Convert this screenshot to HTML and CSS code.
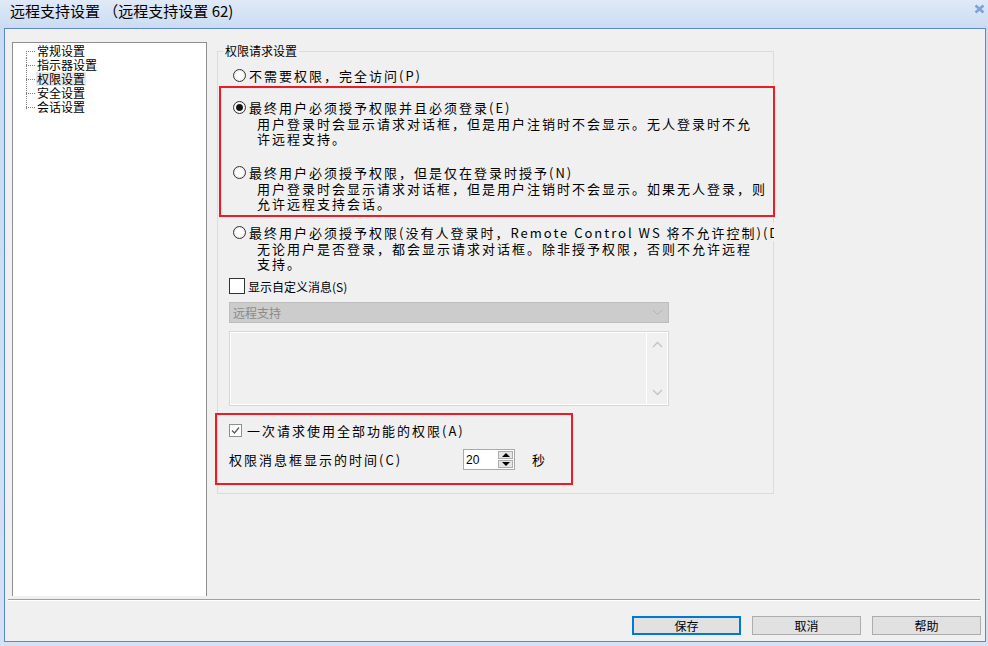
FILE: index.html
```html
<!DOCTYPE html>
<html lang="zh-CN">
<head>
    <meta charset="UTF-8">
    <title>远程支持设置</title>
    <link rel="stylesheet" href="styles.css">
</head>
<body>
    <div class="window">
        <div class="titlebar">
            <span class="title">远程支持设置 （远程支持设置 62)</span>
            <svg class="close" width="11" height="10" viewBox="0 0 11 10">
                <path d="M1.5 1.5 L9.5 8.5 M9.5 1.5 L1.5 8.5" stroke="#7ba4d6" stroke-width="2.6" fill="none"/>
            </svg>
        </div>

        <div class="client">
            <div class="main">
                <div class="tree">
                    <ul>
                        <li><span>常规设置</span></li>
                        <li><span>指示器设置</span></li>
                        <li><span class="selected">权限设置</span></li>
                        <li><span>安全设置</span></li>
                        <li><span>会话设置</span></li>
                    </ul>
                </div>

                <div class="settings">
                    <div class="group">
                        <div class="group-title">权限请求设置</div>

                        <label class="option opt-first"><span class="radio"></span>不需要权限，完全访问(P)</label>

                        <div class="mark mark-options">
                            <label class="option"><span class="radio checked"></span>最终用户必须授予权限并且必须登录(E)</label>
                            <p class="desc">用户登录时会显示请求对话框，但是用户注销时不会显示。无人登录时不允<br>许远程支持。</p>
                            <label class="option option-gap"><span class="radio"></span>最终用户必须授予权限，但是仅在登录时授予(N)</label>
                            <p class="desc">用户登录时会显示请求对话框，但是用户注销时不会显示。如果无人登录，则<br>允许远程支持会话。</p>
                        </div>

                        <label class="option option-wide"><span class="radio"></span>最终用户必须授予权限(没有人登录时，Remote Control WS 将不允许控制)(D)</label>
                        <p class="desc desc-free">无论用户是否登录，都会显示请求对话框。除非授予权限，否则不允许远程<br>支持。</p>

                        <label class="check-row"><span class="checkbox"></span>显示自定义消息(S)</label>

                        <div class="combo">
                            <span>远程支持</span>
                            <svg width="11" height="7" viewBox="0 0 11 7"><polyline points="1,1 5.5,5.5 10,1" stroke="#b4b4b4" fill="none"/></svg>
                        </div>

                        <div class="memo">
                            <div class="memo-scroll">
                                <svg width="11" height="7" viewBox="0 0 11 7"><polyline points="1,6 5.5,1.5 10,6" stroke="#c4c4c4" stroke-width="1.4" fill="none"/></svg>
                                <svg width="11" height="7" viewBox="0 0 11 7"><polyline points="1,1 5.5,5.5 10,1" stroke="#c4c4c4" stroke-width="1.4" fill="none"/></svg>
                            </div>
                        </div>

                        <div class="mark mark-request">
                            <label class="check-row request">
                                <span class="checkbox small">
                                    <svg width="11" height="11" viewBox="0 0 11 11"><polyline points="2,5.5 4.5,8 9,2.5" stroke="#5a5a5a" stroke-width="1.3" fill="none"/></svg>
                                </span>一次请求使用全部功能的权限(A)
                            </label>
                            <div class="time-row">
                                <span class="time-label">权限消息框显示的时间(C)</span>
                                <div class="spin">
                                    <span class="spin-value">20</span>
                                    <div class="spin-btns">
                                        <span class="spin-btn"><span class="tri-up"></span></span>
                                        <span class="spin-btn"><span class="tri-down"></span></span>
                                    </div>
                                </div>
                                <span class="unit">秒</span>
                            </div>
                        </div>
                    </div>
                </div>
            </div>

            <div class="separator"></div>

            <div class="buttons">
                <button class="default">保存</button>
                <button>取消</button>
                <button>帮助</button>
            </div>
        </div>
    </div>
</body>
</html>
```

FILE: styles.css
```css
* {
    box-sizing: border-box;
}
body {
    margin: 0;
    overflow: hidden;
    font-family: "Noto Sans CJK SC", sans-serif;
    font-size: 12px;
    color: #000;
    background: #cbdcf3;
}
.window {
    width: 988px;
    height: 646px;
    background: linear-gradient(#e0eaf7, #cadcf3 28px, #d3e2f5);
}
.titlebar {
    height: 28px;
    display: flex;
    justify-content: space-between;
    align-items: flex-start;
    padding: 0 3px 0 10px;
}
.title {
    font-size: 15px;
    line-height: 18px;
    padding-top: 2px;
}
.close {
    margin-top: 4px;
}
.client {
    margin: 0 2px 0 4px;
    height: 614px;
    border: 1px solid #5f88c6;
    background: #f0f0f0;
    display: flex;
    flex-direction: column;
}
.main {
    display: flex;
    height: 567px;
    padding: 13px 0 0 7px;
}

/* arbol de la izquierda */
.tree {
    width: 195px;
    height: 554px;
    background: #fff;
    border: 1px solid #8f8f8f;
    border-bottom: none;
}
.tree ul {
    list-style: none;
    margin: 1px 0 0 13px;
    padding: 0;
}
.tree li {
    line-height: 14px;
    height: 14px;
    padding-left: 10px;
    background:
        repeating-linear-gradient(to right, #7f7f7f 0 1px, transparent 1px 2px) 0 7px / 9px 1px no-repeat,
        repeating-linear-gradient(#7f7f7f 0 1px, transparent 1px 2px) 0 0 / 1px 100% no-repeat;
}
.tree li:first-child {
    background:
        repeating-linear-gradient(to right, #7f7f7f 0 1px, transparent 1px 2px) 0 7px / 9px 1px no-repeat,
        repeating-linear-gradient(#7f7f7f 0 1px, transparent 1px 2px) 0 7px / 1px 7px no-repeat;
}
.tree li:last-child {
    background:
        repeating-linear-gradient(to right, #7f7f7f 0 1px, transparent 1px 2px) 0 7px / 9px 1px no-repeat,
        repeating-linear-gradient(#7f7f7f 0 1px, transparent 1px 2px) 0 0 / 1px 9px no-repeat;
}
.tree span {
    display: inline-block;
    padding: 0 1px;
}
.tree .selected {
    background: #e8e8e8;
}

/* grupo de opciones */
.settings {
    margin-left: 10px;
    padding-top: 9px;
}
.group {
    width: 557px;
    height: 443px;
    border: 1px solid #dcdcdc;
}
.group-title {
    width: max-content;
    margin: -8px 0 0 5px;
    padding: 0 2px;
    line-height: 14px;
    background: #f0f0f0;
}
.option {
    display: flex;
    align-items: center;
    height: 18px;
    font-size: 13px;
    letter-spacing: 2px;
    white-space: nowrap;
}
.opt-first {
    margin: 8px 0 0 15px;
}
.option-gap {
    margin-top: 17px;
}
.option-wide {
    margin: 6px -1px 0 15px;
    background: #f0f0f0;
    overflow: hidden;
}
.radio {
    flex: none;
    width: 13px;
    height: 13px;
    margin-right: 3px;
    border: 1px solid #333;
    border-radius: 50%;
    background: radial-gradient(circle, #fff 40%, #d6d6d6 100%);
}
.radio.checked {
    background: radial-gradient(circle, #111 0 2.8px, #666 3.4px, #fff 4px, #d6d6d6 100%);
}
.desc {
    margin: 0 0 0 24px;
    font-size: 13px;
    letter-spacing: 2px;
    line-height: 15px;
    white-space: nowrap;
}
.desc-free {
    margin-left: 39px;
}
.mark {
    border: 2px solid #ed1c24;
}
.mark-options {
    margin: 2px -2px 0 1px;
    padding: 10px 0 4px 12px;
}
.check-row {
    display: flex;
    align-items: center;
    height: 16px;
    margin: 7px 0 0 11px;
    white-space: nowrap;
}
.checkbox {
    flex: none;
    width: 16px;
    height: 16px;
    margin-right: 3px;
    border: 1px solid #333;
    background: #fff;
}
.checkbox.small {
    width: 13px;
    height: 13px;
    margin-right: 5px;
    border-color: #8e8f8f;
    display: flex;
    align-items: center;
    justify-content: center;
}
.combo {
    width: 440px;
    height: 21px;
    margin: 8px 0 0 11px;
    padding: 0 5px 0 3px;
    display: flex;
    align-items: center;
    justify-content: space-between;
    background: #cccccc;
    border: 1px solid #bdbdbd;
    color: #8a8a8a;
}
.memo {
    width: 440px;
    height: 75px;
    margin: 8px 0 0 11px;
    display: flex;
    justify-content: flex-end;
    border: 1px solid #d7d7d7;
    box-shadow: inset 1px 1px 0 #fff, inset -1px -1px 0 #fff;
}
.memo-scroll {
    width: 22px;
    padding: 9px 0 9px;
    display: flex;
    flex-direction: column;
    justify-content: space-between;
    align-items: center;
    border-left: 1px solid #fff;
}
.mark-request {
    width: 358px;
    margin: 7px 0 0 -3px;
    padding: 7px 0 13px 12px;
}
.check-row.request {
    margin: 0;
    font-size: 13px;
    letter-spacing: 2px;
}
.time-row {
    display: flex;
    align-items: center;
    height: 21px;
    margin-top: 11px;
    font-size: 13px;
    letter-spacing: 2px;
}
.time-label {
    width: 234px;
    white-space: nowrap;
}
.spin {
    width: 52px;
    height: 21px;
    padding: 0 1px 0 2px;
    display: flex;
    align-items: center;
    justify-content: space-between;
    background: #fff;
    border: 1px solid #a9a9a9;
    letter-spacing: 0;
}
.spin-value {
    font-family: "Liberation Sans", sans-serif;
    font-size: 12px;
}
.spin-btns {
    width: 15px;
    height: 17px;
    display: flex;
    flex-direction: column;
    gap: 1px;
}
.spin-btn {
    flex: 1;
    display: flex;
    align-items: center;
    justify-content: center;
    background: #e6e6e6;
    border: 1px solid #adadad;
}
.tri-up {
    border-left: 4px solid transparent;
    border-right: 4px solid transparent;
    border-bottom: 4px solid #000;
}
.tri-down {
    border-left: 4px solid transparent;
    border-right: 4px solid transparent;
    border-top: 4px solid #000;
}
.unit {
    margin-left: 17px;
}

/* pie */
.separator {
    margin: 3px 5px 0 3px;
    border-top: 1px solid #a0a0a0;
    border-bottom: 1px solid #fff;
}
.buttons {
    display: flex;
    justify-content: flex-end;
    gap: 11px;
    margin: 15px 4px 0 0;
}
button {
    width: 109px;
    height: 19px;
    padding: 0;
    font-family: "Noto Sans CJK SC", sans-serif;
    font-size: 12px;
    line-height: 15px;
    background: #e1e1e1;
    border: 1px solid #adadad;
}
button.default {
    border: 2px solid #0078d7;
}
```
